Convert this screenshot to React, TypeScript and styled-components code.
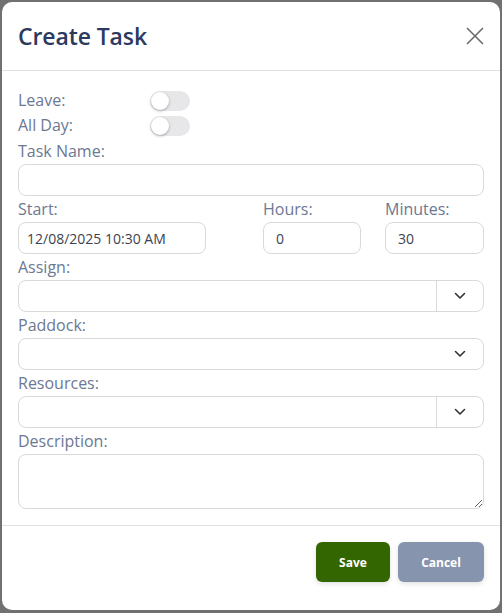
import React from 'react';
import styled, { createGlobalStyle } from 'styled-components';

const GlobalStyle = createGlobalStyle`
  html, body {
    margin: 0;
    padding: 0;
    background: #717171;
  }
  * {
    box-sizing: border-box;
  }
`;

const Chevron: React.FC = () => (
  <svg width="12" height="8" viewBox="0 0 12 8" fill="none">
    <path d="M1.5 1.5 L6 6 L10.5 1.5" stroke="#333" strokeWidth="1.6" strokeLinecap="round" strokeLinejoin="round" />
  </svg>
);

const App: React.FC = () => {
  return (
    <>
      <GlobalStyle />
      <Backdrop>
        <Modal>
          <Header>
            <Title>Create Task</Title>
            <CloseButton aria-label="Close">
              <svg width="18" height="18" viewBox="0 0 18 18">
                <path d="M1 1 L17 17 M17 1 L1 17" stroke="#6b6b6b" strokeWidth="1.6" />
              </svg>
            </CloseButton>
          </Header>

          <Body>
            <ToggleRow>
              <ToggleLabel>Leave:</ToggleLabel>
              <Switch />
            </ToggleRow>
            <ToggleRow>
              <ToggleLabel>All Day:</ToggleLabel>
              <Switch />
            </ToggleRow>

            <Field>
              <Label>Task Name:</Label>
              <TextInput />
            </Field>

            <TimeGrid>
              <Field>
                <Label>Start:</Label>
                <TextInput $width="188px" defaultValue="12/08/2025 10:30 AM" />
              </Field>
              <Field>
                <Label>Hours:</Label>
                <TextInput $pad="12px" defaultValue="0" />
              </Field>
              <Field>
                <Label>Minutes:</Label>
                <TextInput $pad="12px" defaultValue="30" />
              </Field>
            </TimeGrid>

            <Field>
              <Label>Assign:</Label>
              <Select>
                <SelectValue />
                <SelectArrow $divider>
                  <Chevron />
                </SelectArrow>
              </Select>
            </Field>

            <Field>
              <Label>Paddock:</Label>
              <Select>
                <SelectValue />
                <SelectArrow>
                  <Chevron />
                </SelectArrow>
              </Select>
            </Field>

            <Field>
              <Label>Resources:</Label>
              <Select>
                <SelectValue />
                <SelectArrow $divider>
                  <Chevron />
                </SelectArrow>
              </Select>
            </Field>

            <Field>
              <Label>Description:</Label>
              <TextArea />
            </Field>
          </Body>

          <Footer>
            <Button $variant="save">Save</Button>
            <Button $variant="cancel">Cancel</Button>
          </Footer>
        </Modal>
      </Backdrop>
    </>
  );
};

const Backdrop = styled.div`
  width: 502px;
  height: 613px;
  padding: 2px;
  font-family: 'Open Sans', 'Noto Sans', sans-serif;
`;

const Modal = styled.div`
  width: 498px;
  height: 608px;
  background: #ffffff;
  border-radius: 10px;
  display: flex;
  flex-direction: column;
  overflow: hidden;
`;

const Header = styled.div`
  height: 69px;
  display: flex;
  align-items: center;
  justify-content: space-between;
  padding: 0 16px;
  border-bottom: 1px solid #e2e2e2;
`;

const Title = styled.h1`
  margin: 0;
  font-size: 23px;
  font-weight: 600;
  color: #2b3a5e;
  letter-spacing: -0.1px;
`;

const CloseButton = styled.button`
  border: none;
  background: none;
  padding: 0;
  width: 18px;
  height: 18px;
  display: flex;
  cursor: pointer;
`;

const Body = styled.div`
  padding: 17px 16px 16px;
  display: flex;
  flex-direction: column;
  border-bottom: 1px solid #e2e2e2;
`;

const ToggleRow = styled.div`
  height: 25px;
  display: flex;
  align-items: center;
`;

const Label = styled.div`
  height: 26px;
  line-height: 26px;
  font-size: 16px;
  color: #6d7892;
  white-space: nowrap;
`;

const ToggleLabel = styled(Label)`
  width: 132px;
  height: 25px;
  line-height: 25px;
`;

const Switch = styled.span`
  position: relative;
  width: 40px;
  height: 20px;
  border-radius: 10px;
  background: #e7e7ea;

  &::after {
    content: '';
    position: absolute;
    left: 1px;
    top: 1px;
    width: 18px;
    height: 18px;
    border-radius: 50%;
    background: #ffffff;
    box-shadow: 0 1px 3px rgba(0, 0, 0, 0.3);
  }
`;

const Field = styled.div`
  display: flex;
  flex-direction: column;
`;

const TextInput = styled.input<{ $width?: string; $pad?: string }>`
  width: ${p => p.$width || '100%'};
  height: 32px;
  border: 1px solid #d9d9d9;
  border-radius: 8px;
  padding: 0 ${p => p.$pad || '8px'};
  font-family: inherit;
  font-size: 14px;
  color: #3c4350;
  outline: none;
  background: #fff;
`;

const TimeGrid = styled.div`
  display: grid;
  grid-template-columns: 221px 98px 1fr;
  column-gap: 24px;
`;

const Select = styled.div`
  height: 32px;
  border: 1px solid #d9d9d9;
  border-radius: 8px;
  display: flex;
  background: #fff;
`;

const SelectValue = styled.div`
  flex: 1;
`;

const SelectArrow = styled.div<{ $divider?: boolean }>`
  width: 47px;
  display: flex;
  align-items: center;
  justify-content: center;
  border-left: 1px solid ${p => (p.$divider ? '#d9d9d9' : 'transparent')};
`;

const TextArea = styled.textarea`
  height: 55px;
  width: 100%;
  border: 1px solid #d9d9d9;
  border-radius: 8px;
  font-family: inherit;
  font-size: 14px;
  resize: vertical;
  outline: none;
  display: block;
`;

const Footer = styled.div`
  display: flex;
  justify-content: flex-end;
  gap: 8px;
  padding: 16px 16px 0;
`;

const Button = styled.button<{ $variant: 'save' | 'cancel' }>`
  height: 40px;
  width: ${p => (p.$variant === 'save' ? '74px' : '86px')};
  border: none;
  border-radius: 6px;
  background: ${p => (p.$variant === 'save' ? '#346600' : '#8794ae')};
  color: #ffffff;
  font-family: 'Open Sans', sans-serif;
  font-weight: 700;
  font-size: 12px;
  box-shadow: 0 2px 5px rgba(0, 0, 0, 0.12);
  cursor: pointer;
`;

export default App;
